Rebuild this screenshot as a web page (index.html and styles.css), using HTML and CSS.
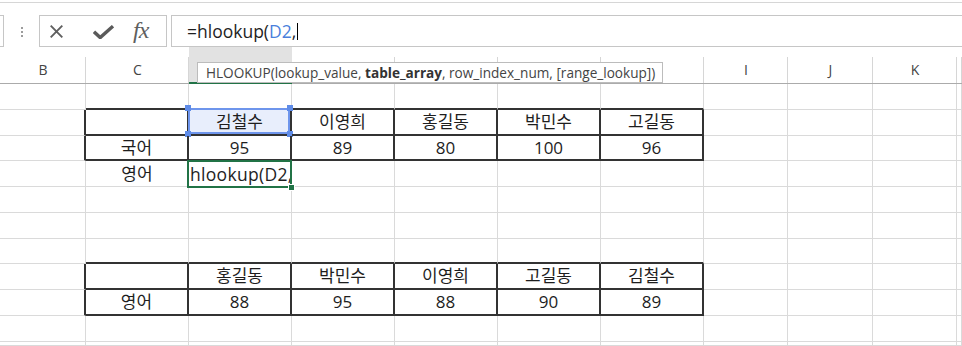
FILE: index.html
```html
<!DOCTYPE html>
<html lang="ko">
<head>
<meta charset="utf-8">
<title>HLOOKUP</title>
<link rel="stylesheet" href="styles.css">
</head>
<body>
<div class="ribbon-edge"></div>
<div class="fbar">
  <div class="namebox"></div>
  <div class="grip"><i></i><i></i><i></i></div>
  <div class="fbtns">
    <svg class="ic-x" width="13" height="13" viewBox="0 0 13 13"><path d="M0.7 0.7 L12.3 12.3 M12.3 0.7 L0.7 12.3" stroke="#5f5f5f" stroke-width="1.9" fill="none"/></svg>
    <svg class="ic-ok" width="21" height="14" viewBox="0 0 21 14"><path d="M1 6.8 L7.2 12.6 L20 1.2" stroke="#5a5a5a" stroke-width="3.4" fill="none" stroke-linejoin="miter"/></svg>
    <span class="ic-fx">fx</span>
  </div>
  <div class="finput">=hlookup(<span class="refc">D2</span>,<span class="caret"></span></div>
</div>
<div class="sheet">
  <div class="colhead">
    <div class="h">B</div><div class="h">C</div><div class="h sel"></div><div class="h"></div><div class="h"></div><div class="h"></div><div class="h"></div><div class="h">I</div><div class="h">J</div><div class="h">K</div><div class="h"></div>
    <div class="tip">HLOOKUP(lookup_value, <b>table_array</b>, row_index_num, [range_lookup])</div>
  </div>
  <div class="grid">
    <!-- row 1 -->
    <div class="c"></div><div class="c bb"></div><div class="c bb"></div><div class="c bb"></div><div class="c bb"></div><div class="c bb"></div><div class="c bb"></div><div class="c"></div><div class="c"></div><div class="c"></div><div class="c"></div>
    <!-- row 2 -->
    <div class="c br"></div><div class="c br bb"></div><div class="c br bb ref">김철수<i class="hd tl"></i><i class="hd tr"></i><i class="hd bl"></i><i class="hd brr"></i></div><div class="c br bb">이영희</div><div class="c br bb">홍길동</div><div class="c br bb">박민수</div><div class="c br bb">고길동</div><div class="c"></div><div class="c"></div><div class="c"></div><div class="c"></div>
    <!-- row 3 -->
    <div class="c br"></div><div class="c br bb">국어</div><div class="c br bb">95</div><div class="c br bb">89</div><div class="c br bb">80</div><div class="c br bb">100</div><div class="c br bb">96</div><div class="c"></div><div class="c"></div><div class="c"></div><div class="c"></div>
    <!-- row 4 -->
    <div class="c"></div><div class="c">영어</div><div class="c edit"><span class="etext">hlookup(D2,</span><i class="fill"></i></div><div class="c"></div><div class="c"></div><div class="c"></div><div class="c"></div><div class="c"></div><div class="c"></div><div class="c"></div><div class="c"></div>
    <!-- row 5 -->
    <div class="c"></div><div class="c"></div><div class="c"></div><div class="c"></div><div class="c"></div><div class="c"></div><div class="c"></div><div class="c"></div><div class="c"></div><div class="c"></div><div class="c"></div>
    <!-- row 6 -->
    <div class="c"></div><div class="c"></div><div class="c"></div><div class="c"></div><div class="c"></div><div class="c"></div><div class="c"></div><div class="c"></div><div class="c"></div><div class="c"></div><div class="c"></div>
    <!-- row 7 -->
    <div class="c"></div><div class="c bb"></div><div class="c bb"></div><div class="c bb"></div><div class="c bb"></div><div class="c bb"></div><div class="c bb"></div><div class="c"></div><div class="c"></div><div class="c"></div><div class="c"></div>
    <!-- row 8 -->
    <div class="c br"></div><div class="c br bb"></div><div class="c br bb">홍길동</div><div class="c br bb">박민수</div><div class="c br bb">이영희</div><div class="c br bb">고길동</div><div class="c br bb">김철수</div><div class="c"></div><div class="c"></div><div class="c"></div><div class="c"></div>
    <!-- row 9 -->
    <div class="c br"></div><div class="c br bb">영어</div><div class="c br bb">88</div><div class="c br bb">95</div><div class="c br bb">88</div><div class="c br bb">90</div><div class="c br bb">89</div><div class="c"></div><div class="c"></div><div class="c"></div><div class="c"></div>
    <!-- row 10 -->
    <div class="c"></div><div class="c"></div><div class="c"></div><div class="c"></div><div class="c"></div><div class="c"></div><div class="c"></div><div class="c"></div><div class="c"></div><div class="c"></div><div class="c"></div>
    <!-- row 11 -->
    <div class="c"></div><div class="c"></div><div class="c"></div><div class="c"></div><div class="c"></div><div class="c"></div><div class="c"></div><div class="c"></div><div class="c"></div><div class="c"></div><div class="c"></div>
  </div>
</div>
</body>
</html>
```
FILE: styles.css
```css
* { box-sizing: border-box; margin: 0; padding: 0; }
body {
  margin: 0;
  width: 962px;
  height: 346px;
  overflow: hidden;
  background: #fff;
  font-family: "Open Sans", "Noto Sans CJK KR", sans-serif;
  color: #1e1e1e;
}
.ribbon-edge { height: 3px; border-bottom: 1px solid #d6d6d6; }

/* formula bar */
.fbar { display: flex; height: 32px; margin-top: 12px; }
.namebox { width: 4px; border: 1px solid #c6c6c6; border-left: none; }
.grip { width: 35px; display: flex; flex-direction: column; align-items: center; justify-content: center; gap: 2px; padding-top: 1px; }
.grip i { display: block; width: 2px; height: 2px; background: #9c9c9c; }
.fbtns { width: 128px; border: 1px solid #c6c6c6; display: flex; align-items: center; padding-left: 10px; }
.ic-x { margin-top: 1px; }
.ic-ok { margin-left: 30px; margin-top: 2px; }
.ic-fx {
  margin-left: 19px;
  font-family: "Liberation Serif", serif;
  font-style: italic;
  font-size: 24px;
  color: #5f5f5f;
  letter-spacing: -1px;
  line-height: 1;
  margin-top: -2px;
}
.finput {
  flex: 1;
  margin-left: 4px;
  border: 1px solid #c6c6c6;
  border-right: none;
  padding-left: 15px;
  font-size: 17.5px;
  line-height: 28px;
  display: flex;
  align-items: center;
  color: #1e1e1e;
}
.refc { color: #4a7fdc; }
.caret { display: inline-block; width: 1px; height: 17px; background: #000; margin-left: 1px; }

/* sheet */
.colhead {
  position: relative;
  display: grid;
  grid-template-columns: 86px repeat(6, 103px) 84px 85px 84px 1fr;
  height: 37px;
  border-bottom: 1px solid #ababab;
}
.h {
  display: flex;
  align-items: center;
  justify-content: center;
  padding-top: 9px;
  font-size: 14px;
  color: #444;
  background: linear-gradient(#d6d6d6, #d6d6d6) right bottom / 1px 26px no-repeat;
}
.h.sel { background: #e2e2e2; border-bottom: 2px solid #217346; margin-bottom: -1px; }
.tip {
  position: absolute;
  left: 197px;
  top: 15px;
  width: 466px;
  height: 21px;
  background: #fff;
  border: 1px solid #bcbcbc;
  font-size: 13.6px;
  line-height: 19px;
  padding-left: 8px;
  color: #444;
  white-space: nowrap;
}
.tip b { font-weight: 700; color: #333; }

.grid {
  display: grid;
  grid-template-columns: 86px repeat(6, 103px) 84px 85px 84px 1fr;
  grid-template-rows: 26px 26px 25px 26px 26px 26px 25px 26px 26px 26px 1fr;
  height: 262px;
}
.c {
  position: relative;
  border-right: 1px solid #dadada;
  border-bottom: 1px solid #dadada;
  display: flex;
  align-items: center;
  justify-content: center;
  font-size: 17px;
  line-height: 20px;
  white-space: nowrap;
}
.c.br { border-right: 2px solid #333; }
.c.bb { border-bottom: 2px solid #333; }

.ref { background: #e8eefc; }
.ref::before {
  content: "";
  position: absolute;
  left: -1px; top: -2px; right: 0; bottom: 0;
  border: 2px solid #6e95ec;
}
.hd { position: absolute; width: 6px; height: 6px; background: #5f8ce8; }
.hd.tl { left: -4px; top: -5px; }
.hd.tr { right: -3px; top: -5px; }
.hd.bl { left: -4px; bottom: -3px; }
.hd.brr { right: -3px; bottom: -3px; }

.edit { justify-content: flex-start; z-index: 2; overflow: visible; }
.edit::before {
  content: "";
  position: absolute;
  left: -2px; top: -1px; right: -1px; bottom: -2px;
  border: 2px solid #217346;
}
.etext { font-size: 17.5px; padding-left: 1px; letter-spacing: 0.3px; }
.fill {
  position: absolute;
  right: -4px; bottom: -5px;
  width: 7px; height: 7px;
  background: #217346;
  border: 1px solid #fff;
}
```
